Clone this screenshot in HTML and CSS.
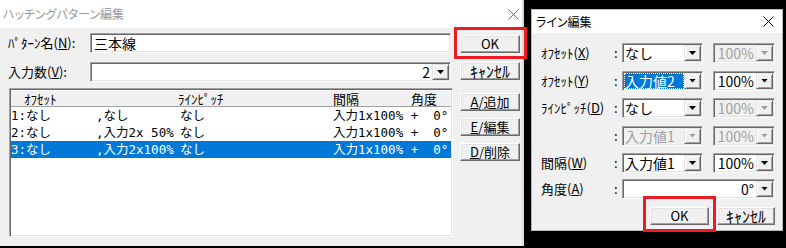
FILE: index.html
```html
<!DOCTYPE html>
<html lang="ja">
<head>
    <meta charset="UTF-8">
    <meta name="viewport" content="width=device-width, initial-scale=1.0">
    <link rel="stylesheet" href="styles.css">
</head>
<body>
    <div class="window hatch-window">
        <div class="titlebar inactive">
            <span class="title">ハッチングパターン編集</span>
            <svg class="close" width="11" height="11" viewBox="0 0 11 11"><path d="M0.5 0.5L10.5 10.5M10.5 0.5L0.5 10.5"/></svg>
        </div>
        <div class="hatch-body">
            <div class="hatch-main">
                <div class="field-row">
                    <span class="field-label">ﾊﾟﾀｰﾝ名(<u>N</u>):</span>
                    <div class="edit">三本線</div>
                </div>
                <div class="field-row count-row">
                    <span class="field-label">入力数(<u>V</u>):</span>
                    <div class="combo count-combo">
                        <span class="combo-text align-right">2</span>
                        <span class="drop"><i></i></span>
                    </div>
                </div>
                <div class="listview">
                    <div class="lv-header">
                        <span>ｵﾌｾｯﾄ</span>
                        <span>ﾗｲﾝﾋﾟｯﾁ</span>
                        <span>間隔</span>
                        <span>角度</span>
                    </div>
                    <div class="lv-row">
                        <span>1:なし</span>
                        <span>,なし</span>
                        <span>なし</span>
                        <span>入力1x100% +  0°</span>
                    </div>
                    <div class="lv-row">
                        <span>2:なし</span>
                        <span>,入力2x 50%</span>
                        <span>なし</span>
                        <span>入力1x100% +  0°</span>
                    </div>
                    <div class="lv-row selected">
                        <span>3:なし</span>
                        <span>,入力2x100%</span>
                        <span>なし</span>
                        <span>入力1x100% +  0°</span>
                    </div>
                </div>
            </div>
            <div class="hatch-buttons">
                <div class="btn btn-ok">OK</div>
                <div class="btn btn-cancel">ｷｬﾝｾﾙ</div>
                <div class="btn btn-add"><u>A</u>/追加</div>
                <div class="btn btn-edit"><u>E</u>/編集</div>
                <div class="btn btn-delete"><u>D</u>/削除</div>
            </div>
        </div>
    </div>

    <div class="highlight hl-first"></div>

    <div class="window line-window">
        <div class="titlebar">
            <span class="title">ライン編集</span>
            <svg class="close" width="11" height="11" viewBox="0 0 11 11"><path d="M0.5 0.5L10.5 10.5M10.5 0.5L0.5 10.5"/></svg>
        </div>
        <div class="line-body">
            <div class="line-grid">
                <span class="lbl">ｵﾌｾｯﾄ(<u>X</u>)</span>
                <span class="colon">:</span>
                <div class="combo main-combo"><span class="combo-text">なし</span><span class="drop"><i></i></span></div>
                <div class="combo rate-combo disabled"><span class="combo-text align-right">100%</span><span class="drop"><i></i></span></div>

                <span class="lbl">ｵﾌｾｯﾄ(<u>Y</u>)</span>
                <span class="colon">:</span>
                <div class="combo main-combo"><span class="combo-text focused">入力値2</span><span class="drop"><i></i></span></div>
                <div class="combo rate-combo"><span class="combo-text align-right">100%</span><span class="drop"><i></i></span></div>

                <span class="lbl">ﾗｲﾝﾋﾟｯﾁ(<u>D</u>)</span>
                <span class="colon">:</span>
                <div class="combo main-combo"><span class="combo-text">なし</span><span class="drop"><i></i></span></div>
                <div class="combo rate-combo disabled"><span class="combo-text align-right">100%</span><span class="drop"><i></i></span></div>

                <span class="lbl"></span>
                <span class="colon">:</span>
                <div class="combo main-combo disabled"><span class="combo-text">入力値1</span><span class="drop"><i></i></span></div>
                <div class="combo rate-combo disabled"><span class="combo-text align-right">100%</span><span class="drop"><i></i></span></div>

                <span class="lbl">間隔(<u>W</u>)</span>
                <span class="colon">:</span>
                <div class="combo main-combo"><span class="combo-text">入力値1</span><span class="drop"><i></i></span></div>
                <div class="combo rate-combo"><span class="combo-text align-right">100%</span><span class="drop"><i></i></span></div>

                <span class="lbl angle">角度(<u>A</u>)</span>
                <span class="colon angle">:</span>
                <div class="combo angle-combo"><span class="combo-text align-right">0°</span><span class="drop"><i></i></span></div>
            </div>
            <div class="line-buttons">
                <div class="btn btn-ok2">OK</div>
                <div class="btn btn-cancel2">ｷｬﾝｾﾙ</div>
            </div>
        </div>
    </div>

    <div class="highlight hl-second"></div>
</body>
</html>
```

FILE: styles.css
```css
* {
    box-sizing: border-box;
}

body {
    margin: 0;
    width: 786px;
    height: 248px;
    position: relative;
    overflow: hidden;
    background: #000;
    font-family: "Noto Sans CJK JP", sans-serif;
    font-size: 13px;
    color: #000;
}

u {
    text-decoration-thickness: 1px;
    text-underline-offset: 1px;
}

/* windows on the desktop */
.window {
    position: absolute;
    background: #f0f0f0;
    display: flex;
    flex-direction: column;
}

.hatch-window {
    left: 0;
    top: 0;
    width: 524px;
    height: 246px;
    border-right: 2px solid #dadada;
}

.line-window {
    left: 531px;
    top: 9px;
    width: 252px;
    height: 222px;
    border: 1px solid #b9b9b9;
}

.titlebar {
    background: #fff;
    display: flex;
    align-items: center;
    justify-content: space-between;
    flex-shrink: 0;
}

.hatch-window .titlebar {
    height: 28px;
    padding: 0 3px 0 3px;
}

.line-window .titlebar {
    height: 23px;
    padding: 0 8px 0 4px;
}

.title {
    font-size: 12px;
    font-feature-settings: "palt";
    line-height: 14px;
}

.titlebar.inactive .title {
    color: #9a9a9a;
}

.close path {
    stroke: #000;
    stroke-width: 1;
    fill: none;
}

.titlebar.inactive .close path {
    stroke: #707070;
}

/* classic controls */
.edit,
.combo {
    height: 20px;
    background: #fff;
    border: 1px solid;
    border-color: #a0a0a0 #fff #fff #a0a0a0;
    box-shadow: inset 1px 1px #696969, inset -1px -1px #e3e3e3;
    padding: 1px;
    display: flex;
    align-items: center;
}

.edit {
    font-size: 14px;
    padding-left: 3px;
    line-height: 16px;
}

.combo-text {
    flex: 1;
    min-width: 0;
    font-size: 14px;
    line-height: 16px;
    height: 16px;
    padding: 0 1px;
    white-space: nowrap;
}

.align-right {
    text-align: right;
    padding-right: 2px;
}

.combo-text.focused {
    background: #0078d7;
    color: #fff;
    outline: 1px dotted #fff;
    outline-offset: -1px;
}

.drop {
    width: 17px;
    height: 16px;
    flex-shrink: 0;
    background: #f0f0f0;
    border: 1px solid;
    border-color: #e3e3e3 #696969 #696969 #e3e3e3;
    box-shadow: inset 1px 1px #fff, inset -1px -1px #a0a0a0;
    display: flex;
    align-items: center;
    justify-content: center;
}

.drop i {
    display: block;
    width: 7px;
    height: 4px;
    background: #000;
    clip-path: polygon(0 0, 100% 0, 50% 100%);
}

.combo.disabled {
    background: #f0f0f0;
    color: #a0a0a0;
}

.combo.disabled .drop i {
    background: #a0a0a0;
}

.btn {
    height: 18px;
    background: #f0f0f0;
    border: 1px solid;
    border-color: #fff #696969 #696969 #fff;
    box-shadow: inset -1px -1px #a0a0a0, inset 1px 1px #e3e3e3;
    display: flex;
    align-items: center;
    justify-content: center;
    font-size: 13px;
    line-height: 14px;
}

.btn-cancel,
.btn-cancel2 {
    font-size: 16px;
}

/* hatching pattern dialog */
.hatch-body {
    flex: 1;
    display: flex;
    padding-left: 8px;
}

.hatch-main {
    width: 445px;
    display: flex;
    flex-direction: column;
}

.field-row {
    display: flex;
    align-items: center;
    margin-top: 5px;
}

.field-row.count-row {
    margin-top: 9px;
}

.field-label {
    width: 82px;
    line-height: 16px;
}

.edit,
.count-combo {
    width: 361px;
}

.listview {
    margin-top: 6px;
    height: 149px;
    margin-left: 1px;
    background: #fff;
    border: 1px solid;
    border-color: #a0a0a0 #fff #fff #a0a0a0;
    box-shadow: inset 1px 1px #696969, inset -1px -1px #e3e3e3;
    padding: 1px;
}

.lv-header {
    height: 17px;
    background: #f0f0f0;
    border-top: 1px solid #fff;
    border-bottom: 1px solid #a0a0a0;
    display: grid;
    grid-template-columns: 154px 155px 78px 1fr;
    padding-left: 13px;
    font-size: 13px;
    line-height: 15px;
}

.lv-row {
    height: 17px;
    display: grid;
    grid-template-columns: 85px 84px 153px 1fr;
    font-family: "DejaVu Sans Mono", "Noto Sans CJK JP", monospace;
    font-size: 12.5px;
    line-height: 17px;
    white-space: pre;
}

.lv-row.selected {
    background: #0078d7;
    color: #fff;
}

.hatch-buttons {
    width: 60px;
    margin-left: 7px;
    display: flex;
    flex-direction: column;
}

.btn-ok {
    margin-top: 7px;
}

.btn-cancel {
    margin-top: 9px;
}

.btn-add {
    margin-top: 13px;
}

.btn-edit,
.btn-delete {
    margin-top: 7px;
}

/* line edit dialog */
.line-body {
    flex: 1;
    padding: 10px 7px 0 9px;
    display: flex;
    flex-direction: column;
}

.line-grid {
    display: grid;
    grid-template-columns: 73px 8px 81px 72px;
    grid-template-rows: 20px 20px 20px 20px 20px 20px;
    row-gap: 7.5px;
    align-items: center;
}

.line-grid .main-combo {
    width: 81px;
}

.line-grid .rate-combo {
    margin-left: 10px;
    width: 62px;
}

.lbl {
    line-height: 16px;
    white-space: nowrap;
}

.colon {
    font-size: 13px;
    line-height: 16px;
}

.angle {
    position: relative;
    top: -2px;
}

.line-grid .angle-combo {
    grid-column: 3 / 5;
    width: 153px;
    position: relative;
    top: -2px;
}

.line-buttons {
    display: flex;
    justify-content: flex-end;
    gap: 8px;
    margin-top: 6px;
}

.btn-ok2 {
    width: 59px;
}

.btn-cancel2 {
    width: 58px;
}

/* red call-outs drawn over the screenshot */
.highlight {
    position: absolute;
    border: 3px solid #ec1c24;
}

.hl-first {
    left: 454px;
    top: 27px;
    width: 73px;
    height: 32px;
}

.hl-second {
    left: 643px;
    top: 196px;
    width: 73px;
    height: 36px;
}
```
